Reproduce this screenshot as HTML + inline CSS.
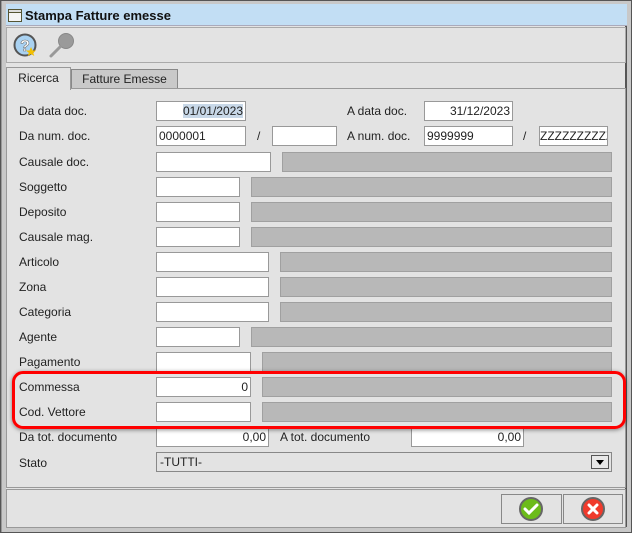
<!DOCTYPE html>
<html><head><meta charset="utf-8"><style>
*{box-sizing:border-box;margin:0;padding:0}
body{width:632px;height:533px;background:#a8a8a8;font-family:"Liberation Sans",sans-serif;font-size:12px;color:#222;position:relative;overflow:hidden}
.a{position:absolute}
.f{position:absolute;background:#fff;border:1px solid #999;height:20px;line-height:18px;padding:0 2px;font-size:12px}
.g{position:absolute;background:#b8b8b8;border:1px solid #a0a0a0;height:20px}
.l{position:absolute;left:19px;font-size:12px;line-height:14px}
.r{text-align:right}
</style></head><body>
<div class="a" style="left:0;top:0;width:632px;height:533px;background:#d6d6d6;border:1px solid #555"></div>
<div class="a" style="left:1px;top:1px;width:630px;height:531px;background:#c8c8c8;border-left:1px solid #999"></div>
<div class="a" style="left:6px;top:4px;width:621px;height:523px;background:#e3e3e3;border-right:2px solid #555"></div>
<!-- title -->
<div class="a" style="left:6px;top:4px;width:621px;height:22px;background:#c2def4;border-bottom:1px solid #aab"></div>
<div class="a" style="left:8px;top:9px;width:14px;height:13px;border:1px solid #553;background:#f4f4f4"><div style="height:3px;border-bottom:1px solid #553;background:#ddd"></div></div>
<div class="a" style="left:25px;top:8px;font-weight:bold;font-size:13px;line-height:15px;color:#111">Stampa Fatture emesse</div>
<!-- toolbar -->
<div class="a" style="left:6px;top:27px;width:620px;height:36px;border:1px solid #aaa;background:#e3e3e3"></div>
<svg class="a" style="left:10px;top:31px" width="70" height="30">
<circle cx="15" cy="14" r="10.5" fill="#a9d2f2" stroke="#555" stroke-width="2"/>
<text x="15" y="20" font-size="16" text-anchor="middle" fill="#fff" stroke="#777" stroke-width="0.6" font-family="Liberation Sans" font-weight="bold">?</text>
<polygon points="21,16 22.5,19.5 26,19.5 23.2,21.7 24.3,25 21,23 17.7,25 18.8,21.7 16,19.5 19.5,19.5" fill="#f4c000"/>
<circle cx="56" cy="10" r="7.5" fill="#9a9a9a" stroke="#888"/>
<line x1="50" y1="16" x2="41" y2="25" stroke="#999" stroke-width="3" stroke-linecap="round"/>
</svg>
<!-- tabs -->
<div class="a" style="left:71px;top:69px;width:107px;height:20px;background:#c9c9c9;border:1px solid #888;border-bottom:none;text-align:center;line-height:18px;font-size:12px">Fatture Emesse</div>
<div class="a" style="left:6px;top:88px;width:620px;height:400px;border:1px solid #999;background:#e3e3e3"></div>
<div class="a" style="left:6px;top:67px;width:65px;height:23px;background:#e3e3e3;border:1px solid #999;border-bottom:none;text-align:center;line-height:20px;font-size:12px">Ricerca</div>
<!-- rows -->
<div class="l" style="top:104px">Da data doc.</div>
<div class="f r" style="left:156px;top:101px;width:90px"><span style="background:#c8d8e8">01/01/2023</span></div>
<div class="a" style="left:347px;top:104px">A data doc.</div>
<div class="f r" style="left:424px;top:101px;width:89px">31/12/2023</div>

<div class="l" style="top:129px">Da num. doc.</div>
<div class="f" style="left:156px;top:126px;width:90px">0000001</div>
<div class="a" style="left:257px;top:129px">/</div>
<div class="f" style="left:272px;top:126px;width:65px"></div>
<div class="a" style="left:347px;top:129px">A num. doc.</div>
<div class="f" style="left:424px;top:126px;width:89px">9999999</div>
<div class="a" style="left:523px;top:129px">/</div>
<div class="f" style="left:539px;top:126px;width:69px;padding:0;overflow:hidden;white-space:nowrap">ZZZZZZZZZZ</div>

<div class="l" style="top:155px">Causale doc.</div>
<div class="f" style="left:156px;top:152px;width:115px"></div><div class="g" style="left:282px;top:152px;width:330px"></div>
<div class="l" style="top:180px">Soggetto</div>
<div class="f" style="left:156px;top:177px;width:84px"></div><div class="g" style="left:251px;top:177px;width:361px"></div>
<div class="l" style="top:205px">Deposito</div>
<div class="f" style="left:156px;top:202px;width:84px"></div><div class="g" style="left:251px;top:202px;width:361px"></div>
<div class="l" style="top:230px">Causale mag.</div>
<div class="f" style="left:156px;top:227px;width:84px"></div><div class="g" style="left:251px;top:227px;width:361px"></div>
<div class="l" style="top:255px">Articolo</div>
<div class="f" style="left:156px;top:252px;width:113px"></div><div class="g" style="left:280px;top:252px;width:332px"></div>
<div class="l" style="top:280px">Zona</div>
<div class="f" style="left:156px;top:277px;width:113px"></div><div class="g" style="left:280px;top:277px;width:332px"></div>
<div class="l" style="top:305px">Categoria</div>
<div class="f" style="left:156px;top:302px;width:113px"></div><div class="g" style="left:280px;top:302px;width:332px"></div>
<div class="l" style="top:330px">Agente</div>
<div class="f" style="left:156px;top:327px;width:84px"></div><div class="g" style="left:251px;top:327px;width:361px"></div>
<div class="l" style="top:355px">Pagamento</div>
<div class="f" style="left:156px;top:352px;width:95px"></div><div class="g" style="left:262px;top:352px;width:350px"></div>
<div class="l" style="top:380px">Commessa</div>
<div class="f r" style="left:156px;top:377px;width:95px">0</div><div class="g" style="left:262px;top:377px;width:350px"></div>
<div class="l" style="top:405px">Cod. Vettore</div>
<div class="f" style="left:156px;top:402px;width:95px"></div><div class="g" style="left:262px;top:402px;width:350px"></div>
<div class="l" style="top:430px">Da tot. documento</div>
<div class="f r" style="left:156px;top:427px;width:113px">0,00</div>
<div class="a" style="left:280px;top:430px">A tot. documento</div>
<div class="f r" style="left:411px;top:427px;width:113px">0,00</div>
<div class="l" style="top:456px">Stato</div>
<div class="a" style="left:156px;top:452px;width:456px;height:20px;border:1px solid #888;background:#e3e3e3;line-height:18px;padding-left:3px">-TUTTI-</div>
<div class="a" style="left:591px;top:455px;width:18px;height:14px;border:1px solid #555;background:#e8e8e8"><div style="margin:4px auto 0;width:0;height:0;border-left:4px solid transparent;border-right:4px solid transparent;border-top:5px solid #000"></div></div>
<!-- red highlight -->
<div class="a" style="left:12px;top:371px;width:614px;height:58px;border:3px solid #f00;border-radius:11px;box-shadow:0 1px 4px rgba(0,0,0,0.45)"></div>
<!-- bottom bar -->
<div class="a" style="left:6px;top:489px;width:620px;height:39px;border:1px solid #999;background:#e3e3e3"></div>
<div class="a" style="left:501px;top:494px;width:61px;height:30px;border:1px solid #888"></div>
<div class="a" style="left:563px;top:494px;width:60px;height:30px;border:1px solid #888"></div>
<svg class="a" style="left:517px;top:496px" width="28" height="28"><circle cx="14" cy="13" r="11" fill="#6cbb1a" stroke="#666" stroke-width="2"/><path d="M8 13 L12 17 L20 9" stroke="#fff" stroke-width="3" fill="none" stroke-linecap="round"/></svg>
<svg class="a" style="left:579px;top:496px" width="28" height="28"><circle cx="14" cy="13" r="11" fill="#f03a2c" stroke="#666" stroke-width="2"/><path d="M10 9 L18 17 M18 9 L10 17" stroke="#fff" stroke-width="3" stroke-linecap="round"/></svg>
</body></html>
